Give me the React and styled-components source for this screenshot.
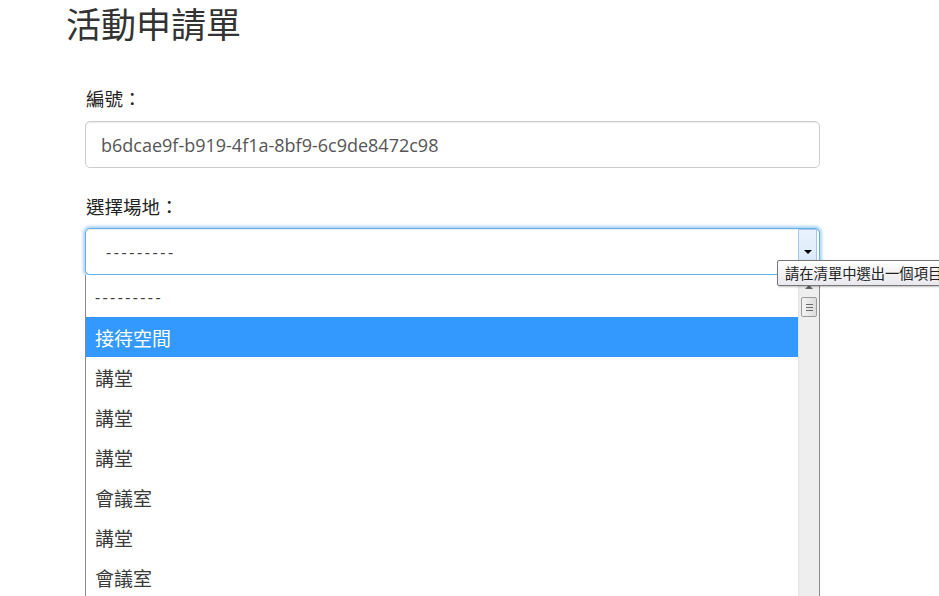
import React from 'react'
import styled, { createGlobalStyle } from 'styled-components'

const GlobalStyle = createGlobalStyle`
  html, body {
    margin: 0;
    padding: 0;
    overflow: hidden;
    background: #fff;
  }
  * {
    box-sizing: border-box;
  }
`

const options = ['---------', '接待空間', '講堂', '講堂', '講堂', '會議室', '講堂', '會議室', '講堂']

export default function App() {
  return (
    <>
      <GlobalStyle />
      <Page>
        <Title>活動申請單</Title>
        <Form>
          <Group>
            <Label>編號：</Label>
            <Input readOnly value="b6dcae9f-b919-4f1a-8bf9-6c9de8472c98" />
          </Group>
          <Group>
            <Label>選擇場地：</Label>
            <SelectWrap>
              <SelectBox>
                <SelectValue>---------</SelectValue>
                <DropButton>
                  <Arrow />
                </DropButton>
              </SelectBox>
              <Dropdown>
                <OptionList>
                  {options.map((opt, i) => (
                    <Option key={i} $active={i === 1} $dash={i === 0}>
                      {opt}
                    </Option>
                  ))}
                </OptionList>
                <Scrollbar>
                  <ScrollArrow />
                  <Thumb>
                    <Grip />
                    <Grip />
                    <Grip />
                  </Thumb>
                </Scrollbar>
              </Dropdown>
              <Tooltip>請在清單中選出一個項目。</Tooltip>
            </SelectWrap>
          </Group>
        </Form>
      </Page>
    </>
  )
}

const Page = styled.div`
  width: 939px;
  height: 596px;
  font-family: 'Open Sans', 'Noto Sans CJK TC', sans-serif;
  color: #333;
`

const Title = styled.h1`
  margin: 0;
  padding: 0 0 0 66px;
  font-family: 'Noto Sans CJK TC', sans-serif;
  font-size: 35px;
  font-weight: 400;
  line-height: 46px;
  color: #333;
`

const Form = styled.div`
  margin: 40px 0 0 85px;
  width: 735px;
  display: flex;
  flex-direction: column;
  gap: 26px;
`

const Group = styled.div`
  display: flex;
  flex-direction: column;
  gap: 10px;
`

const Label = styled.label`
  font-family: 'Noto Sans CJK TC', sans-serif;
  font-size: 18.5px;
  line-height: 25px;
  padding-left: 1px;
  color: #222;
`

const Input = styled.input`
  width: 100%;
  height: 47px;
  padding: 0 15px;
  border: 1px solid #ccc;
  border-radius: 5px;
  font-family: 'Open Sans', sans-serif;
  font-size: 18px;
  color: #555;
  outline: none;
  box-shadow: inset 0 1px 1px rgba(0, 0, 0, 0.075);
`

const SelectWrap = styled.div`
  position: relative;
`

const SelectBox = styled.div`
  height: 47px;
  margin-top: -1px;
  border: 1px solid #66afe9;
  border-radius: 5px;
  box-shadow: inset 0 1px 1px rgba(0, 0, 0, 0.075), 0 0 3px 2px rgba(102, 175, 233, 0.55);
  display: flex;
  align-items: stretch;
  background: #fff;
`

const SelectValue = styled.div`
  flex: 1;
  display: flex;
  align-items: center;
  padding-left: 20px;
  font-size: 16px;
  letter-spacing: 2.6px;
  color: #444;
`

const DropButton = styled.div`
  width: 19px;
  margin: 0 2px 0 0;
  border: 1px solid #a9c6e6;
  background: linear-gradient(#eaf3fc, #d4e6f8);
  display: flex;
  align-items: center;
  justify-content: center;
`

const Arrow = styled.div`
  width: 0;
  height: 0;
  border-left: 4px solid transparent;
  border-right: 4px solid transparent;
  border-top: 4px solid #000;
`

const Dropdown = styled.div`
  position: absolute;
  top: 46px;
  left: 0;
  right: 0;
  height: 330px;
  display: flex;
  background: #fff;
  border-left: 1px solid #8a8a8a;
  border-right: 1px solid #8a8a8a;
  z-index: 2;
`

const OptionList = styled.div`
  flex: 1;
  padding-top: 2px;
  overflow: hidden;
`

const Option = styled.div`
  height: 40px;
  display: flex;
  align-items: center;
  padding-left: 9px;
  font-family: ${p => (p.$dash ? "'Open Sans', sans-serif" : "'Noto Sans CJK TC', sans-serif")};
  color: ${p => (p.$active ? '#fff' : '#3a3a3a')};
  background: ${p => (p.$active ? '#3399ff' : 'transparent')};
  letter-spacing: ${p => (p.$dash ? '2.4px' : '0')};
  font-size: ${p => (p.$dash ? '16px' : '19px')};
`

const Scrollbar = styled.div`
  width: 21px;
  background: #eeeeee;
  border-left: 1px solid #e2e2e2;
  display: flex;
  flex-direction: column;
  align-items: center;
  padding-top: 10px;
`

const ScrollArrow = styled.div`
  width: 0;
  height: 0;
  border-left: 4px solid transparent;
  border-right: 4px solid transparent;
  border-bottom: 4px solid #606060;
`

const Thumb = styled.div`
  margin-top: 8px;
  width: 16px;
  height: 20px;
  border: 1px solid #9a9a9a;
  border-radius: 2px;
  background: linear-gradient(90deg, #f4f4f4, #dcdcdc);
  display: flex;
  flex-direction: column;
  align-items: center;
  justify-content: center;
  gap: 2px;
`

const Grip = styled.div`
  width: 7px;
  height: 1px;
  background: #6a6a6a;
`

const Tooltip = styled.div`
  position: absolute;
  top: 31px;
  left: 692px;
  z-index: 3;
  white-space: nowrap;
  padding: 3px 6px 3px 7px;
  border: 1px solid #767676;
  border-radius: 2px;
  background: linear-gradient(#ffffff, #e8e8ee);
  box-shadow: 1px 1px 2px rgba(0, 0, 0, 0.25);
  font-family: 'Noto Sans CJK TC', sans-serif;
  font-size: 14.3px;
  line-height: 18px;
  color: #222;
`
